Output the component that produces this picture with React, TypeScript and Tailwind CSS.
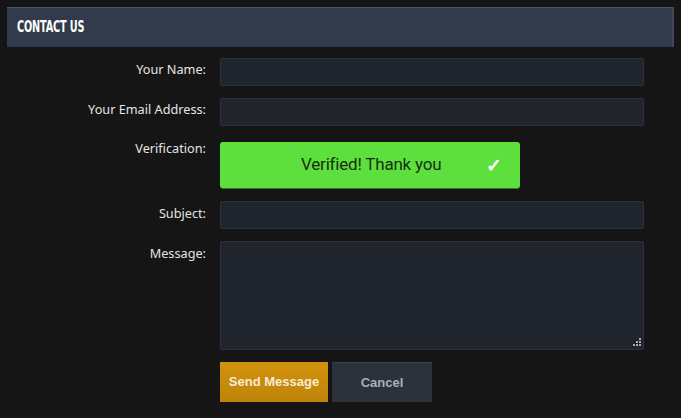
import React from 'react';

const label = 'text-right text-[12.7px] text-[#e4e4e4] leading-[18px]';
const field = 'h-[28px] w-[424px] rounded-[2px] border border-[#2b313a] bg-[#20252d]';

function Grip() {
  return (
    <svg width="11" height="11" viewBox="0 0 11 11" className="absolute right-[1px] bottom-[1px]">
      {[
        [9, 2], [9, 5], [6, 5], [9, 8], [6, 8], [3, 8],
      ].map(([x, y], i) => (
        <rect key={i} x={x - 1} y={y - 1} width="2" height="2" fill="#a3a9b1" />
      ))}
    </svg>
  );
}

export default function App() {
  return (
    <div className="h-[418px] w-[681px] overflow-hidden bg-[#151515] p-[7px] font-['Noto_Sans','Open_Sans',sans-serif]">
      {/* Header */}
      <div className="flex h-[40px] w-[667px] items-center border-t border-[#4a5566] border-r-2 border-r-[#3f4859] bg-[#323b4b] px-[10px]">
        <h1 className="origin-left scale-x-[0.72] font-['DejaVu_Sans_Condensed','DejaVu_Sans',sans-serif] text-[15px] font-bold tracking-[-0.2px] text-white">
          CONTACT US
        </h1>
      </div>

      {/* Form */}
      <div className="mt-[11px] grid grid-cols-[199px_424px] gap-x-[14px]">
        <div className={`${label} pt-[2px]`}>Your Name:</div>
        <div className={field} />

        <div className={`${label} mt-[12px] pt-[2px]`}>Your Email Address:</div>
        <div className={`${field} mt-[12px]`} />

        <div className={`${label} mt-[16px] pt-[0px] -translate-y-[3px]`}>Verification:</div>
        <div className="mt-[16px]">
          <div className="flex h-[46px] w-[300px] items-center rounded-[3px] bg-[#5ddf3d] pl-[81px] pr-[18px] shadow-[0_1px_0_#2f7a20]">
            <span className="font-['Roboto',sans-serif] text-[17px] tracking-[-0.2px] text-[#17300f]">Verified! Thank you</span>
            <span className="ml-auto text-[19px] font-bold leading-none text-white">✓</span>
          </div>
        </div>

        <div className={`${label} mt-[13px] pt-[3px]`}>Subject:</div>
        <div className={`${field} mt-[13px]`} />

        <div className={`${label} mt-[12px] pt-[3px]`}>Message:</div>
        <div className={`${field} relative mt-[12px] h-[109px]`}>
          <Grip />
        </div>

        <div />
        <div className="mt-[12px] flex gap-[4px] font-['Liberation_Sans',Arial,sans-serif] text-[13px] font-bold">
          <button className="h-[40px] w-[108px] bg-gradient-to-b from-[#d2920c] to-[#bf830a] text-[#f7ecd4]">
            Send Message
          </button>
          <button className="h-[40px] w-[100px] border-t border-[#3a414c] bg-[#2c323c] text-[#a9b0ba]">
            Cancel
          </button>
        </div>
      </div>
    </div>
  );
}
